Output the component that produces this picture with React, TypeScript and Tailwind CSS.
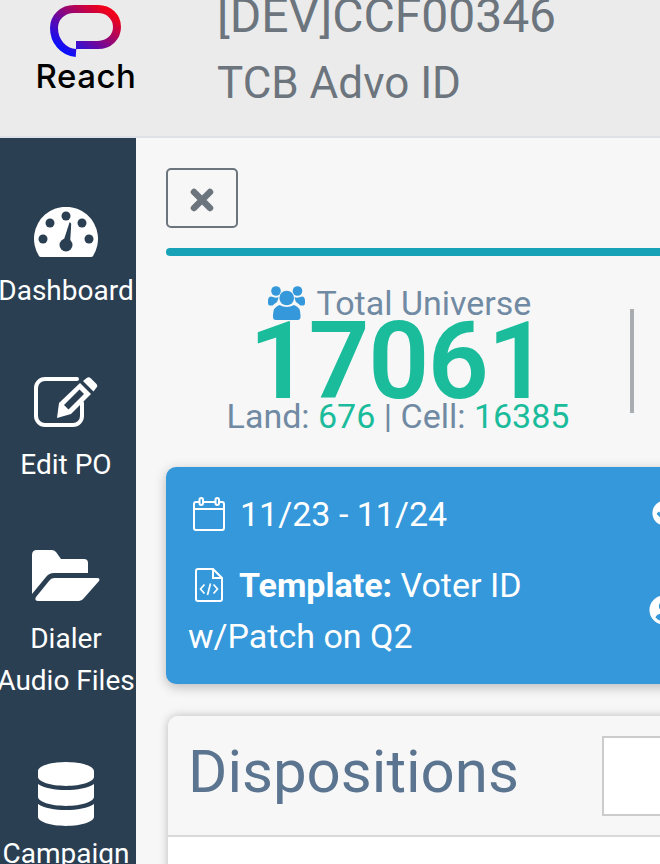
import React from "react";
import { FaDatabase, FaCheckCircle, FaUserCircle } from "react-icons/fa";

const font = { fontFamily: "Roboto, sans-serif" };
const navy = "#2b3f53";

function Logo() {
  return (
    <svg width="72" height="54" viewBox="0 0 72 54" className="block">
      <defs>
        <linearGradient id="lg" x1="0" y1="1" x2="1" y2="0">
          <stop offset="0.1" stopColor="#0a10ff" />
          <stop offset="0.9" stopColor="#f0001a" />
        </linearGradient>
      </defs>
      <path d="M26 48 C 13 47 4 36 4 23 C 4 12 13 4 24 4 H 48 C 59 4 67 12 67 22 C 67 32 59 40 48 40 H 26" fill="none" stroke="url(#lg)" strokeWidth="8" />
    </svg>
  );
}

function Gauge() {
  return (
    <svg width="64" height="50" viewBox="0 0 64 50" className="block">
      <path d="M7 50 Q5.5 50 5 49 A32 32 0 1 1 59 49 Q58.5 50 57 50 Z" fill="white" />
      {[[32, 9], [16, 16], [48, 16], [9, 32], [55, 32]].map(([x, y]) => (
        <circle key={`${x}-${y}`} cx={x} cy={y} r="4.5" fill={navy} />
      ))}
      <circle cx="32" cy="38" r="6.5" fill={navy} />
      <path d="M28.5 37 L35.5 15.5 Q37 15 37.2 17 L36 38 Z" fill={navy} />
    </svg>
  );
}

function EditIcon() {
  return (
    <svg width="64" height="50" viewBox="0 0 64 50" className="block">
      <path d="M43 2 H11 A9 9 0 0 0 2 11 V39 A9 9 0 0 0 11 48 H39 A9 9 0 0 0 48 39 V26" fill="none" stroke="white" strokeWidth="4" strokeLinecap="round" />
      <path d="M25 26 L46 6 L57 17 L37 37 L23 41 Z" fill="white" />
      <path d="M30 28 L45.5 12.500 L50 17 L34.500 32.500 Z" fill={navy} />
      <path d="M49 4 L53 0.800 Q55 -0.200 56.500 1 L62.500 7 Q64 9 62.500 10.500 L59.500 14.500 Z" fill="white" />
    </svg>
  );
}

function FolderIcon() {
  return (
    <svg width="68" height="51" viewBox="0 0 68 51" className="block" fill="white">
      <path d="M0 5 Q0 0 5 0 H20 Q22 0 24 2 L29 9 H52 Q56 9 56 13 V23 H22 Q17 23 14 27 L0 44 Z" />
      <path d="M22 28 H65 Q68.5 28 67 31 L52 48 Q50 51 47 51 H6 Q2 51 4 47 L17 31 Q19 28 22 28 Z" />
    </svg>
  );
}

function CloseIcon() {
  return (
    <svg width="24" height="24" viewBox="0 0 24 24" className="block mt-[3px]" stroke="#6c757d" strokeWidth="6.500" strokeLinecap="round">
      <path d="M4 4 L20 20 M20 4 L4 20" />
    </svg>
  );
}

function UsersIcon() {
  return (
    <svg width="37" height="34" viewBox="0 0 37 34" className="block shrink-0 mr-[12px]" fill="#3498db">
      <circle cx="8" cy="5" r="4.800" />
      <circle cx="29.500" cy="5" r="4.800" />
      <circle cx="18.700" cy="12" r="7.300" />
      <path d="M0 15 Q0 10.500 3 10.500 Q8 12.500 10.500 11 Q10 14 9 16 Q6.500 17.500 4.500 19.500 L1.500 19.500 Q0 19 0 17 Z" />
      <path d="M37 15 Q37 10.500 34 10.500 Q29 12.500 26.500 11 Q27 14 28 16 Q30.500 17.500 32.500 19.500 L35.500 19.500 Q37 19 37 17 Z" />
      <path d="M5 29 Q5 21 11.500 19 Q18.700 23 26 19 Q32.500 21 32.500 29 L32.500 31 Q32.500 34 29.500 34 L8 34 Q5 34 5 31 Z" />
    </svg>
  );
}

function CalendarIcon() {
  return (
    <svg width="32" height="34" viewBox="0 0 32 34" className="block shrink-0 ml-[5px] mr-[15px]" fill="none" stroke="white" strokeWidth="2">
      <rect x="1" y="5" width="30" height="28" rx="2" />
      <path d="M1 12 H31" />
      <rect x="6.500" y="1" width="3.500" height="7" rx="1.750" fill="#3498db" />
      <rect x="22.500" y="1" width="3.500" height="7" rx="1.750" fill="#3498db" />
    </svg>
  );
}

function FileCodeIcon() {
  return (
    <svg width="28" height="34" viewBox="0 0 28 34" className="inline-block ml-[7px] mr-[16px] align-[-5px]" fill="none" stroke="white" strokeWidth="2">
      <path d="M18 1 H3 Q1 1 1 3 V31 Q1 33 3 33 H25 Q27 33 27 31 V10 Z" />
      <path d="M18 1 V10 H27" />
      <path d="M9.500 16.500 L5.500 21 L9.500 25.500 M18.500 16.500 L22.500 21 L18.500 25.500 M15.500 15.500 L12.500 27" strokeWidth="1.700" />
    </svg>
  );
}

function NavItem({ icon, children, gap, top }: { icon: React.ReactNode; children: React.ReactNode; gap: string; top: string }) {
  return (
    <div className={`flex flex-col items-center text-white ${top}`}>
      {icon}
      <div className={`text-center text-[28px] leading-[42px] whitespace-nowrap ${gap}`}>{children}</div>
    </div>
  );
}

export default function App() {
  return (
    <div className="w-[660px] h-[864px] overflow-hidden bg-[#f7f7f7] flex flex-col" style={font}>
      <header className="h-[138px] shrink-0 flex bg-[#ebebeb] border-b-2 border-[#dee2e6] overflow-hidden">
        <div className="w-[172px] shrink-0 flex flex-col items-center pt-[5px]">
          <Logo />
          <div className="text-[33px] leading-[32px] font-medium text-black tracking-[0.5px] mt-[1px]" style={{ fontFamily: "Inter, sans-serif" }}>Reach</div>
        </div>
        <div className="pl-[45px] -mt-[10px] text-[#6c757d] whitespace-nowrap">
          <div className="text-[48px] leading-[52px]">[DEV]CCF00346</div>
          <div className="text-[44px] leading-[52px] mt-[15px]">TCB Advo ID</div>
        </div>
      </header>
      <div className="flex flex-1 min-h-0">
        <aside className="w-[136px] shrink-0 bg-[#2b3f53] flex flex-col overflow-hidden pt-[69px] pr-[4px]">
          <NavItem icon={<Gauge />} gap="mt-[13px]" top="">Dashboard</NavItem>
          <NavItem icon={<EditIcon />} gap="mt-[17px]" top="mt-[65px]">Edit PO</NavItem>
          <NavItem icon={<FolderIcon />} gap="mt-[17px]" top="mt-[64px]">Dialer<br />Audio Files</NavItem>
          <NavItem icon={<FaDatabase className="w-[56px] h-[64px]" />} gap="mt-[7px]" top="mt-[60px]">Campaign</NavItem>
        </aside>
        <main className="flex-1 min-w-0 overflow-hidden pl-[30px] pt-[30px]">
          <div className="w-[800px]">
            <div className="w-[72px] h-[60px] rounded-[5px] border-2 border-[#6c757d] flex items-center justify-center">
              <CloseIcon />
            </div>
            <div className="h-[8px] mt-[20px] bg-[#17a2b8] rounded-full" />
            <div className="flex mt-[28px] h-[170px]">
              <div className="w-[464px] flex flex-col items-center">
                <div className="flex items-center text-[#718aa3] text-[34px] leading-[38px] h-[38px] ml-[3px]">
                  <UsersIcon />
                  Total Universe
                </div>
                <div className="text-[#1abc9c] text-[107px] leading-[72px] font-semibold tracking-[-1.5px] mt-[4px]">17061</div>
                <div className="text-[#718aa3] text-[34px] leading-[38px] -mt-[1px]">
                  Land: <span className="text-[#1abc9c]">676</span> | Cell: <span className="text-[#1abc9c]">16385</span>
                </div>
              </div>
              <div className="w-[4px] h-[104px] bg-[#a9adb1] mt-[25px]" />
            </div>
            <div className="h-[217px] bg-[#3498db] rounded-[10px] shadow-[0_3px_12px_rgba(0,0,0,0.25)] text-white text-[34px] flex mt-[13px] pl-[22px] pt-[24px]">
              <div className="w-[464px]">
                <div className="flex items-center h-[46px] whitespace-nowrap">
                  <CalendarIcon />
                  11/23 - 11/24
                </div>
                <div className="mt-[23px] leading-[51px]">
                  <FileCodeIcon />
                  <b className="font-bold">Template:</b> Voter ID<br />w/Patch on Q2
                </div>
              </div>
              <div className="flex flex-col items-start">
                <FaCheckCircle className="text-[26px] mt-[9px]" />
                <FaUserCircle className="text-[30px] mt-[69px] -ml-[3px]" />
              </div>
            </div>
            <div className="mt-[32px] ml-[2px] rounded-t-[10px] bg-white shadow-[0_0_10px_rgba(0,0,0,0.25)] h-[300px]">
              <div className="h-[121px] bg-[#f7f7f7] border-b-2 border-[#d9d9d9] rounded-t-[10px] flex pl-[20px] pt-[12px]">
                <div className="text-[#5b7490] text-[60px] leading-[88px]">Dispositions</div>
                <div className="ml-[83px] w-[400px] h-[80px] bg-white border-2 border-[#cccccc] mt-[8px]" />
              </div>
            </div>
          </div>
        </main>
      </div>
    </div>
  );
}
